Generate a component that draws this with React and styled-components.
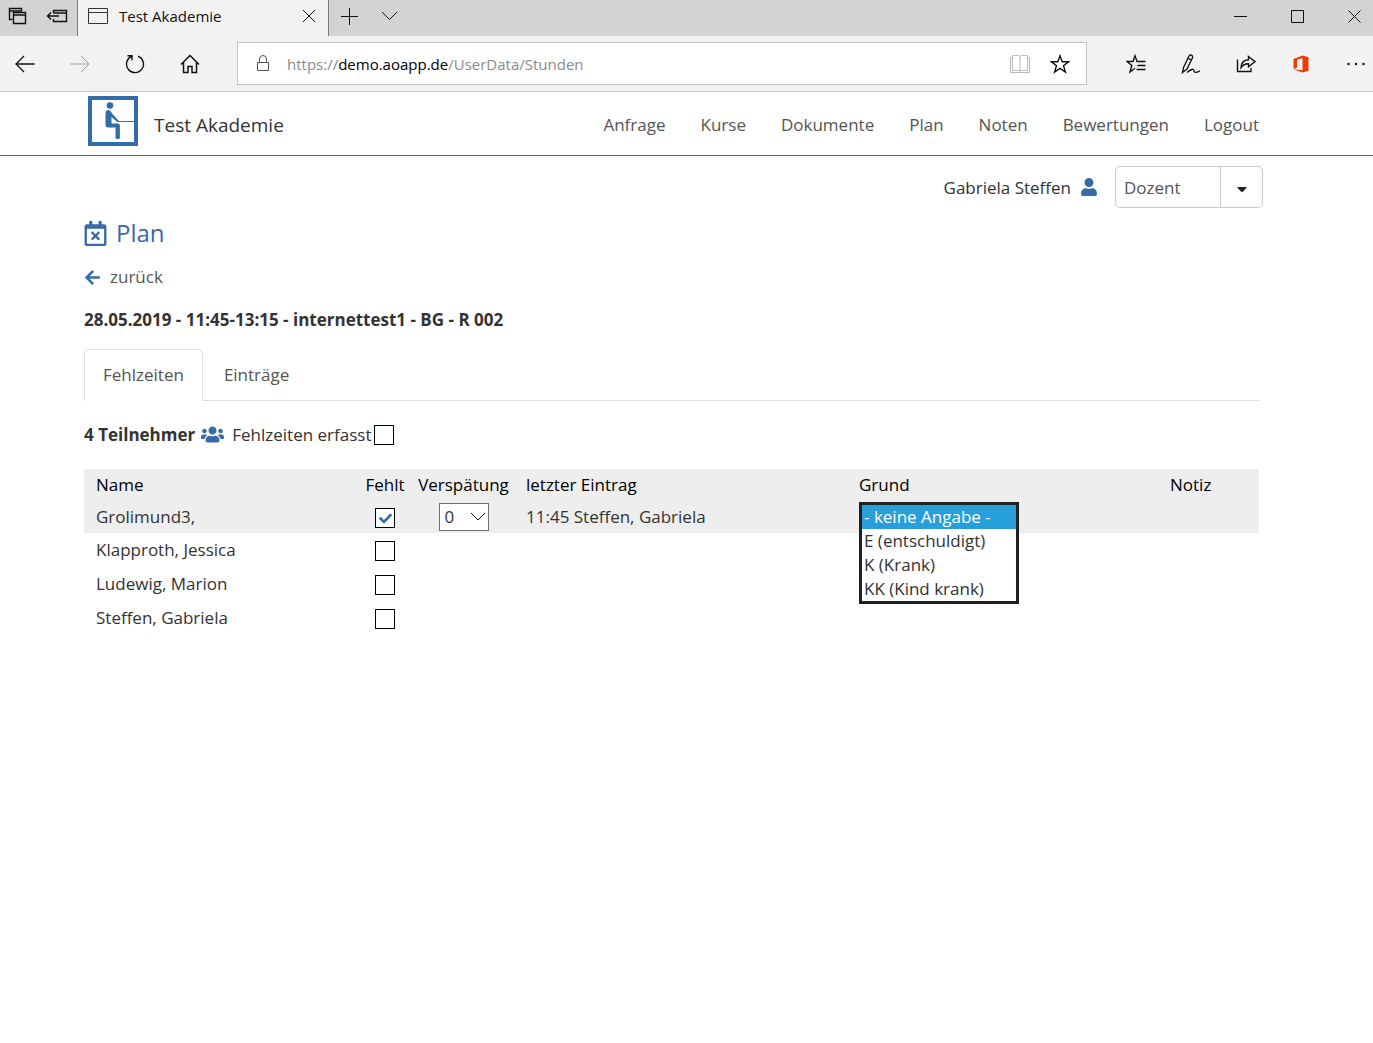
import React, { useState } from "react";
import styled, { createGlobalStyle } from "styled-components";
import {
  FaArrowLeft,
  FaCaretDown,
  FaCheck,
  FaRegCalendarTimes,
  FaUser,
  FaUsers,
} from "react-icons/fa";

const GlobalStyle = createGlobalStyle`
  * {
    box-sizing: border-box;
  }

  body {
    margin: 0;
    background: #ffffff;
    color: #333333;
    font-family: "Segoe UI", "Open Sans", "Noto Sans", sans-serif;
    font-size: 17px;
    line-height: 24px;
  }

  button,
  input,
  select {
    font: inherit;
    color: inherit;
  }
`;

const IconButton = styled.button`
  display: flex;
  align-items: center;
  justify-content: center;
  flex: none;
  width: ${(props) => props.$width || 32}px;
  height: 32px;
  padding: 0;
  border: 0;
  background: none;
  color: #111111;
`;

const Line = styled.svg`
  display: block;
  fill: none;
  stroke: ${(props) => props.$color || "#111111"};
  stroke-width: ${(props) => props.$weight || 1};
`;

/* browser frame */

const TitleBar = styled.div`
  display: flex;
  height: 36px;
  background: #d3d3d3;
`;

const TabTools = styled.div`
  display: flex;
  align-items: center;
  gap: 8px;
  width: 77px;
  padding: 0 0 4px 1px;
`;

const BrowserTab = styled.div`
  display: flex;
  align-items: center;
  width: 252px;
  padding: 0 4px 4px 10px;
  border: solid #7c7c7c;
  border-width: 0 1px;
  background: #f2f2f2;
  color: #111111;
  font-size: 15px;

  span {
    flex: 1;
    padding-left: 10px;
  }
`;

const NewTab = styled.div`
  display: flex;
  gap: 8px;
  padding-left: 4px;
`;

const WindowButtons = styled.div`
  display: flex;
  gap: 25px;
  margin-left: auto;
  padding-right: 3px;
`;

const Toolbar = styled.div`
  display: flex;
  align-items: center;
  height: 56px;
  border-bottom: 1px solid #c8c8c8;
  background: #f2f2f2;
`;

const ToolGroup = styled.div`
  display: flex;
  gap: 23px;
  padding: 0 31px 0 9px;
`;

const AddressBar = styled.div`
  display: flex;
  flex: 1;
  align-items: center;
  height: 43px;
  padding: 0 6px 0 9px;
  border: 1px solid #c3c3c3;
  background: #ffffff;
`;

const Url = styled.span`
  flex: 1;
  padding-left: 8px;
  color: #8b8b8b;
  font-size: 15px;

  b {
    color: #000000;
    font-weight: 400;
  }
`;

const ActionGroup = styled.div`
  display: flex;
  gap: 23px;
  padding: 0 1px 0 33px;
`;

/* page */

const Header = styled.header`
  display: flex;
  align-items: center;
  height: 64px;
  padding: 0 114px 0 88px;
  border-bottom: 1px solid #33669c;
`;

const Brand = styled.a`
  display: flex;
  align-items: center;
  gap: 16px;
  padding-bottom: 5px;
  color: #333333;
  font-size: 19px;
  text-decoration: none;

  span {
    padding-top: 8px;
  }
`;

const Nav = styled.nav`
  display: flex;
  gap: 35px;
  margin-left: auto;
  padding-top: 2px;

  a {
    color: #555555;
    text-decoration: none;
  }
`;

const Main = styled.main`
  padding: 10px 114px 40px 84px;
`;

const UserBar = styled.div`
  display: flex;
  align-items: center;
  justify-content: flex-end;
  margin-right: -4px;

  svg {
    color: #366ba6;
  }
`;

const UserName = styled.span`
  padding: 2px 9px 0 0;
`;

const RoleBox = styled.div`
  display: grid;
  grid-template-columns: 1fr 42px;
  width: 148px;
  height: 42px;
  margin-left: 17px;
  border: 1px solid #c9c9c9;
  border-radius: 5px;

  select {
    grid-area: 1 / 1 / 2 / 3;
    appearance: none;
    padding: 2px 8px 0;
    border: 0;
    background: none;
    color: #555555;
  }
`;

const RoleArrow = styled.span`
  grid-area: 1 / 2;
  display: flex;
  align-items: center;
  justify-content: center;
  padding-top: 4px;
  border-left: 1px solid #c9c9c9;
  pointer-events: none;

  svg {
    color: #222222;
  }
`;

const PageTitle = styled.h1`
  display: flex;
  align-items: center;
  gap: 8px;
  margin: 9px 0 0 -1px;
  color: #366ba6;
  font-size: 24px;
  font-weight: 400;
  line-height: 32px;
`;

const BackLink = styled.a`
  display: inline-flex;
  align-items: center;
  gap: 9px;
  margin-top: 16px;
  color: #555555;
  text-decoration: none;

  svg {
    color: #366ba6;
  }
`;

const Lesson = styled.h2`
  margin: 16px 0 17px;
  font-size: 17px;
  font-weight: 700;
  line-height: 24px;
`;

const Tabs = styled.div`
  display: flex;
  border-bottom: 1px solid #dddddd;
`;

const Tab = styled.button`
  height: 52px;
  margin-bottom: -1px;
  padding: 0 18px;
  border: 1px solid ${(props) => (props.$active ? "#dddddd" : "transparent")};
  border-bottom-color: ${(props) => (props.$active ? "#ffffff" : "transparent")};
  border-radius: 5px 5px 0 0;
  background: none;
  color: #555555;

  & + & {
    margin-left: 2px;
  }
`;

const Summary = styled.div`
  display: flex;
  align-items: center;
  margin: 22px 0;

  svg {
    margin: 0 8px 0 6px;
    color: #366ba6;
  }

  label {
    display: flex;
    align-items: center;
    gap: 3px;
  }
`;

const CheckFrame = styled.span`
  display: inline-grid;
  width: 20px;
  height: 20px;
  vertical-align: middle;

  input {
    grid-area: 1 / 1;
    appearance: none;
    width: 20px;
    height: 20px;
    margin: 0;
    border: 1px solid #000000;
    background: #ffffff;
  }

  svg {
    grid-area: 1 / 1;
    place-self: center;
    z-index: 1;
    margin: 2px 0 0;
    color: #366ba6;
    pointer-events: none;
  }
`;

const Table = styled.table`
  width: 100%;
  table-layout: fixed;
  border-collapse: collapse;

  th,
  td {
    height: 34px;
    padding: 0 12px;
    text-align: left;
    white-space: nowrap;
  }

  th {
    height: 32px;
    color: #000000;
    font-weight: 400;
  }

  .center {
    padding: 0;
    text-align: center;
  }
`;

const HeadRow = styled.tr`
  background: #eeeeee;
`;

const Row = styled.tr`
  background: ${(props) => (props.$active ? "#eeeeee" : "transparent")};

  && td {
    height: ${(props) => (props.$active ? 32 : 34)}px;
  }
`;

const DelayBox = styled.span`
  display: inline-grid;
  width: 50px;
  height: 28px;
  vertical-align: middle;

  select {
    grid-area: 1 / 1;
    appearance: none;
    width: 50px;
    height: 28px;
    padding: 0 5px;
    border: 1px solid #707070;
    border-radius: 0;
    background: #ffffff;
  }

  svg {
    grid-area: 1 / 1;
    place-self: center end;
    margin-right: 3px;
    pointer-events: none;
  }
`;

const ReasonCell = styled.td`
  position: relative;
`;

/* the opened list hangs over the rows below */
const ReasonList = styled.select`
  position: absolute;
  top: 1px;
  left: 12px;
  z-index: 2;
  width: 160px;
  padding: 0;
  border: 3px solid #1b2124;
  border-radius: 0;
  background: #ffffff;
  overflow: hidden;
  outline: 0;

  option {
    height: 24px;
    min-height: 24px;
    padding: 0 2px;
    line-height: 24px;
  }

  option:checked {
    background: linear-gradient(#269fda, #269fda);
    -webkit-text-fill-color: #ffffff;
  }
`;

const menu = [
  "Anfrage",
  "Kurse",
  "Dokumente",
  "Plan",
  "Noten",
  "Bewertungen",
  "Logout",
];

const reasons = [
  "- keine Angabe -",
  "E (entschuldigt)",
  "K (Krank)",
  "KK (Kind krank)",
];

const students = [
  { name: "Grolimund3,", lastEntry: "11:45 Steffen, Gabriela" },
  { name: "Klapproth, Jessica" },
  { name: "Ludewig, Marion" },
  { name: "Steffen, Gabriela" },
];

const Logo = () => (
  <svg width="50" height="50" viewBox="0 0 50 50" aria-hidden="true">
    <rect x="2" y="2" width="46" height="46" fill="#fff" stroke="#336ca6" strokeWidth="4" />
    <circle cx="22" cy="9.500" r="3.300" fill="#336ca6" />
    <path
      d="M20.5 14q-3 .3-3 3.500v11q0 3 3 3h7v10q0 1.700 2.200 1.700t2.200-1.700V29.500q0-2-2-2h-6.400V21l5.500 4.700q1.500.6 1.600-1l-6.300-7q-1.500-3.500-3.800-3.700z"
      fill="#336ca6"
    />
    <path d="M29 25.500h18" stroke="#336ca6" />
  </svg>
);

const CheckBox = ({ label, checked, onChange, id }) => (
  <CheckFrame>
    <input
      type="checkbox"
      id={id}
      aria-label={label}
      checked={checked}
      onChange={onChange}
    />
    {checked && <FaCheck size={13} />}
  </CheckFrame>
);

const Browser = () => (
  <>
    <TitleBar>
      <TabTools>
        <IconButton aria-label="Tabs">
          <Line width="20" height="20" viewBox="0 0 20 20" $weight={1.4}>
            <path d="M5.500 13.500h-3v-11h12v3M2.500 5h12" />
            <path d="M6.500 6.500h12v11h-12zM6.500 9h12" />
          </Line>
        </IconButton>
        <IconButton aria-label="Set tabs aside">
          <Line width="22" height="16" viewBox="0 0 22 16" $weight={1.4}>
            <path d="M7.500 5V2.500h13v11h-13V11M7.500 5h13M13 8H1.500M5 4.500L1.500 8 5 11.500" />
          </Line>
        </IconButton>
      </TabTools>
      <BrowserTab>
        <Line width="21" height="17" viewBox="0 0 21 17" $color="#333333">
          <path d="M.5.5h19v15H.5zM.5 4.500h19" />
        </Line>
        <span>Test Akademie</span>
        <IconButton aria-label="Close tab" $width={30}>
          <Line width="14" height="14" viewBox="0 0 14 14">
            <path d="M1 1l12 12M13 1L1 13" />
          </Line>
        </IconButton>
      </BrowserTab>
      <NewTab>
        <IconButton aria-label="New tab">
          <Line width="17" height="17" viewBox="0 0 17 17">
            <path d="M8.500 0v17M0 8.500h17" />
          </Line>
        </IconButton>
        <IconButton aria-label="Tab menu">
          <Line width="17" height="10" viewBox="0 0 17 10">
            <path d="M1 1l7.500 7.500L16 1" />
          </Line>
        </IconButton>
      </NewTab>
      <WindowButtons>
        <IconButton aria-label="Minimize">
          <Line width="13" height="13" viewBox="0 0 13 13">
            <path d="M0 6.500h13" />
          </Line>
        </IconButton>
        <IconButton aria-label="Maximize">
          <Line width="13" height="13" viewBox="0 0 13 13">
            <path d="M.5.5h12v12H.5z" />
          </Line>
        </IconButton>
        <IconButton aria-label="Close">
          <Line width="13" height="13" viewBox="0 0 13 13">
            <path d="M.5.5l12 12M12.500.5l-12 12" />
          </Line>
        </IconButton>
      </WindowButtons>
    </TitleBar>
    <Toolbar>
      <ToolGroup>
        <IconButton aria-label="Back">
          <Line width="20" height="18" viewBox="0 0 20 18" $weight={1.3}>
            <path d="M19.500 9H1M9 1L1 9l8 8" />
          </Line>
        </IconButton>
        <IconButton aria-label="Forward">
          <Line width="20" height="18" viewBox="0 0 20 18" $color="#a0a0a0">
            <path d="M.5 9H19M11 1l8 8-8 8" />
          </Line>
        </IconButton>
        <IconButton aria-label="Refresh">
          <Line width="20" height="20" viewBox="0 0 20 20" $weight={1.4}>
            <path d="M13 2.200A8.500 8.500 0 1 1 6.500 2.400M2.500 1.800h4.500v4.500" />
          </Line>
        </IconButton>
        <IconButton aria-label="Home">
          <Line width="20" height="20" viewBox="0 0 20 20" $weight={1.5}>
            <path d="M1 10.500l9-9 9 9M3.500 8.500V18.500H8v-6h4v6h4.500V8.500" />
          </Line>
        </IconButton>
      </ToolGroup>
      <AddressBar>
        <IconButton aria-label="Site information">
          <Line width="14" height="18" viewBox="0 0 14 18" $color="#555555">
            <path d="M1.500 7.500h11v8h-11zM3.500 7.500V4a3.500 3.500 0 0 1 7 0v3.500" />
          </Line>
        </IconButton>
        <Url>
          https://<b>demo.aoapp.de</b>/UserData/Stunden
        </Url>
        <IconButton aria-label="Reading view" $width={40}>
          <Line width="20" height="20" viewBox="0 0 20 20" $color="#bbbbbb">
            <path d="M2.500 1.500h6q1.500 0 1.500 1.500 0-1.500 1.500-1.500h6v15h-6Q10 16.500 10 17.500q0-1-1.500-1h-6zM10 3v14M2.500 3.500h-2v15h19v-15h-2" />
          </Line>
        </IconButton>
        <IconButton aria-label="Add to favorites" $width={40}>
          <Line width="20" height="20" viewBox="0 0 20 20" $weight={1.4}>
            <path d="M10 1.800l2.200 6h6.300l-5 4 1.900 6.300L10 14.400l-5.400 3.700 1.900-6.300-5-4h6.300z" />
          </Line>
        </IconButton>
      </AddressBar>
      <ActionGroup>
        <IconButton aria-label="Favorites">
          <Line width="20" height="20" viewBox="0 0 20 20" $weight={1.4}>
            <path d="M11 7.500L9 1.800 7 7.500H1l4.800 4L4 18l5-3.800M10.500 7.500h9M11.500 11.500h8M10.500 15.500h9" />
          </Line>
        </IconButton>
        <IconButton aria-label="Notes">
          <Line width="20" height="20" viewBox="0 0 20 20" $weight={1.3}>
            <path d="M1.500 18.500l1-5L8 2q1-1.500 2.500-.8t1 2.500L6 15zM7 4.500l3.500 1.700M6 18.500q3-2.500 5-3t2 1.200 2 1.600 4-1.500" />
          </Line>
        </IconButton>
        <IconButton aria-label="Share">
          <Line width="20" height="18" viewBox="0 0 20 18" $weight={1.4}>
            <path d="M1.500 4.500v12h13.500v-3.500M12.500 1.500L19 6.700l-6.500 5.200V8.700Q8 8.500 5 12.500q.5-7.500 7.500-7.800z" />
          </Line>
        </IconButton>
        <IconButton aria-label="Office">
          <svg width="16" height="18" viewBox="0 0 16 18">
            <path
              fill="#eb3c00"
              d="M.5 4L9.500.5 15.500 2.200V15.800L9.500 17.500.5 14.300l9 1V3.200L4 4.600v8L.5 14.200z"
            />
          </svg>
        </IconButton>
        <IconButton aria-label="More">
          <svg width="18" height="4" viewBox="0 0 18 4" fill="#111111">
            <circle cx="1.500" cy="2" r="1.200" />
            <circle cx="9" cy="2" r="1.200" />
            <circle cx="16.500" cy="2" r="1.200" />
          </svg>
        </IconButton>
      </ActionGroup>
    </Toolbar>
  </>
);

const App = () => {
  const [recorded, setRecorded] = useState(false);
  const [missing, setMissing] = useState([true, false, false, false]);

  const toggleMissing = (index) => {
    setMissing((pre) => pre.map((m, i) => (i === index ? !m : m)));
  };

  return (
    <>
      <GlobalStyle />
      <Browser />
      <Header>
        <Brand href="#">
          <Logo />
          <span>Test Akademie</span>
        </Brand>
        <Nav>
          {menu.map((item) => (
            <a href="#" key={item}>
              {item}
            </a>
          ))}
        </Nav>
      </Header>
      <Main>
        <UserBar>
          <UserName>Gabriela Steffen</UserName>
          <FaUser size={18} />
          <RoleBox>
            <select aria-label="Rolle" defaultValue="Dozent">
              <option>Dozent</option>
            </select>
            <RoleArrow>
              <FaCaretDown size={16} />
            </RoleArrow>
          </RoleBox>
        </UserBar>
        <PageTitle>
          <FaRegCalendarTimes size={25} />
          Plan
        </PageTitle>
        <BackLink href="#">
          <FaArrowLeft size={17} />
          zurück
        </BackLink>
        <Lesson>28.05.2019 - 11:45-13:15 - internettest1 - BG - R 002</Lesson>
        <Tabs role="tablist">
          <Tab role="tab" aria-selected="true" $active>
            Fehlzeiten
          </Tab>
          <Tab role="tab" aria-selected="false">
            Einträge
          </Tab>
        </Tabs>
        <Summary>
          <strong>4 Teilnehmer</strong>
          <FaUsers size={23} />
          <label htmlFor="recorded">
            Fehlzeiten erfasst
            <CheckBox
              id="recorded"
              checked={recorded}
              onChange={() => setRecorded(!recorded)}
            />
          </label>
        </Summary>
        <Table>
          <colgroup>
            <col style={{ width: 273 }} />
            <col style={{ width: 56 }} />
            <col style={{ width: 101 }} />
            <col style={{ width: 333 }} />
            <col />
            <col style={{ width: 101 }} />
          </colgroup>
          <thead>
            <HeadRow>
              <th>Name</th>
              <th className="center">Fehlt</th>
              <th className="center">Verspätung</th>
              <th>letzter Eintrag</th>
              <th>Grund</th>
              <th>Notiz</th>
            </HeadRow>
          </thead>
          <tbody>
            {students.map((student, index) => (
              <Row key={student.name} $active={index === 0}>
                <td>{student.name}</td>
                <td className="center">
                  <CheckBox
                    label={`${student.name} fehlt`}
                    checked={missing[index]}
                    onChange={() => toggleMissing(index)}
                  />
                </td>
                <td className="center">
                  {index === 0 && (
                    <DelayBox>
                      <select aria-label="Verspätung" defaultValue="0">
                        <option>0</option>
                      </select>
                      <Line width="16" height="9" viewBox="0 0 16 9">
                        <path d="M1 1l7 7 7-7" />
                      </Line>
                    </DelayBox>
                  )}
                </td>
                <td>{student.lastEntry}</td>
                <ReasonCell>
                  {index === 0 && (
                    <ReasonList size={4} aria-label="Grund" defaultValue={reasons[0]}>
                      {reasons.map((reason) => (
                        <option key={reason}>{reason}</option>
                      ))}
                    </ReasonList>
                  )}
                </ReasonCell>
                <td />
              </Row>
            ))}
          </tbody>
        </Table>
      </Main>
    </>
  );
};

export default App;
